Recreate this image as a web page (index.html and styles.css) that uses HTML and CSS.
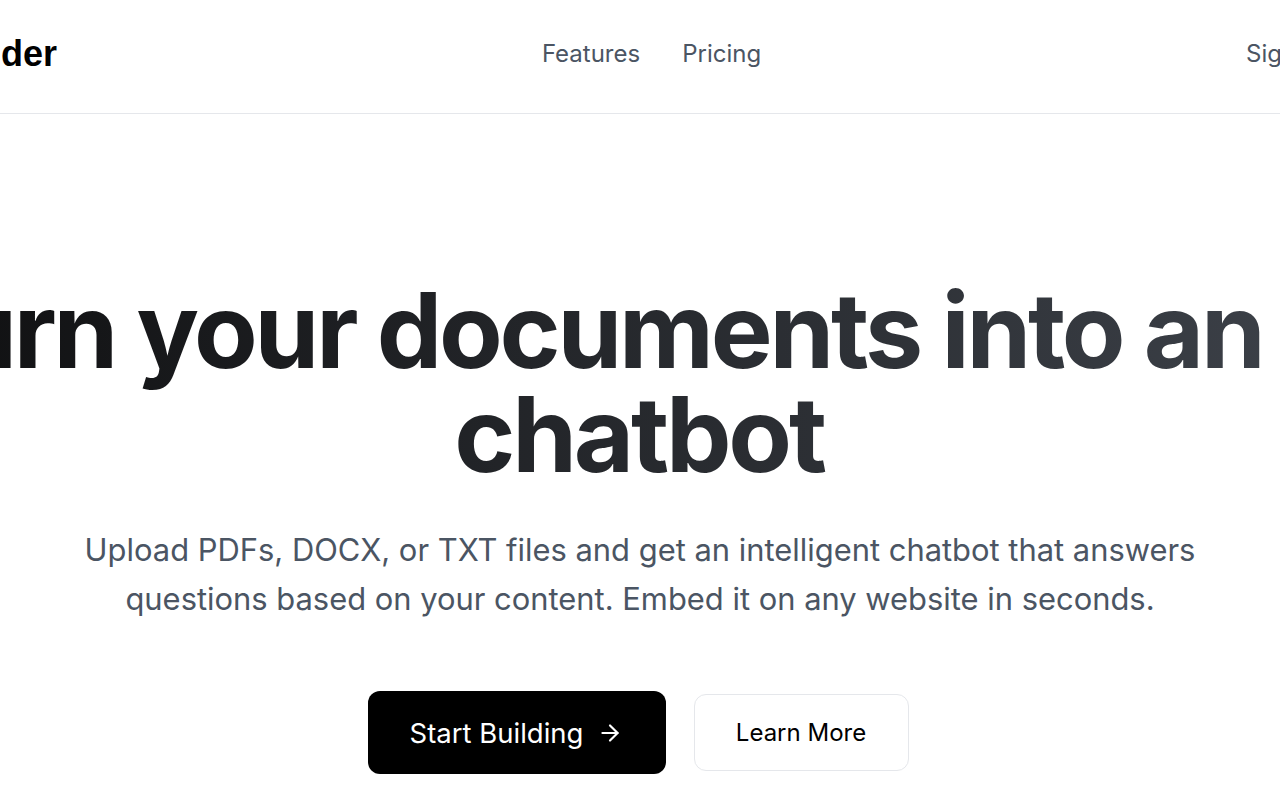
FILE: index.html
```html
<!DOCTYPE html>
<html lang="en">
<head>
<meta charset="utf-8">
<title>DocBuilder</title>
<link rel="stylesheet" href="styles.css">
</head>
<body>
<div class="page">
  <header class="header">
    <nav class="nav">
      <a class="logo" href="#">DocBuilder</a>
      <div class="nav-links">
        <a href="#">Features</a>
        <a href="#">Pricing</a>
      </div>
      <div class="nav-actions">
        <a href="#">Sign In</a>
      </div>
    </nav>
  </header>
  <main class="hero">
    <h1 class="title">Turn your documents into an AI chatbot</h1>
    <p class="subtitle">Upload PDFs, DOCX, or TXT files and get an intelligent chatbot that answers questions based on your content. Embed it on any website in seconds.</p>
    <div class="actions">
      <a class="btn btn-primary" href="#">Start Building
        <svg class="arrow" viewBox="0 0 24 24" width="24" height="24" fill="none" stroke="currentColor" stroke-width="2" stroke-linecap="round" stroke-linejoin="round"><path d="M5 12h14"/><path d="M12 5l7 7-7 7"/></svg>
      </a>
      <a class="btn btn-secondary" href="#">Learn More</a>
    </div>
  </main>
</div>
</body>
</html>
```
FILE: styles.css
```css
html, body {
  margin: 0;
  padding: 0;
  background: #ffffff;
  overflow: hidden;
}
body {
  font-family: Inter, "Noto Sans", sans-serif;
  color: #111827;
}
a { text-decoration: none; color: inherit; }

.page {
  width: 1280px;
  min-height: 798px;
  display: flex;
  flex-direction: column;
  align-items: center;
}

.header {
  width: 1280px;
  height: 113px;
  border-bottom: 1px solid #e5e7eb;
  display: flex;
  justify-content: center;
  flex-shrink: 0;
}
.nav {
  width: 1550px;
  flex-shrink: 0;
  padding-bottom: 6px;
  display: flex;
  align-items: center;
  justify-content: space-between;
}
.logo {
  font-family: "Liberation Sans", Arial, sans-serif;
  font-weight: 700;
  font-size: 36px;
  color: #000000;
}
.nav-links {
  display: flex;
  gap: 42px;
  font-size: 24px;
  color: #4b5563;
}
.nav-actions {
  width: 169px;
  display: flex;
  font-size: 24px;
  color: #4b5563;
}

.hero {
  width: 1280px;
  display: flex;
  flex-direction: column;
  align-items: center;
  padding-top: 164px;
}
.title {
  width: 1600px;
  flex-shrink: 0;
  margin: 0 2px 0 0;
  text-align: center;
  font-size: 104px;
  font-weight: 700;
  line-height: 104px;
  letter-spacing: -0.031em;
  background: linear-gradient(to right, #0d0d0e, #40454d);
  -webkit-background-clip: text;
  background-clip: text;
  color: transparent;
}
.subtitle {
  width: 1180px;
  flex-shrink: 0;
  margin: 39px 0 0;
  text-align: center;
  font-size: 30.9px;
  line-height: 49px;
  color: #4b5563;
}
.actions {
  margin-top: 68px;
  margin-right: 4px;
  display: flex;
  align-items: center;
  gap: 28px;
}
.btn {
  display: flex;
  align-items: center;
  justify-content: center;
  box-sizing: border-box;
  border-radius: 12px;
}
.btn-primary {
  width: 298px;
  height: 83px;
  background: #000000;
  color: #ffffff;
  font-size: 27.5px;
  gap: 14px;
}
.arrow {
  width: 26px;
  height: 26px;
}
.btn-secondary {
  width: 215px;
  height: 77px;
  background: #ffffff;
  border: 1px solid #e5e7eb;
  color: #000000;
  font-size: 24px;
}
```
